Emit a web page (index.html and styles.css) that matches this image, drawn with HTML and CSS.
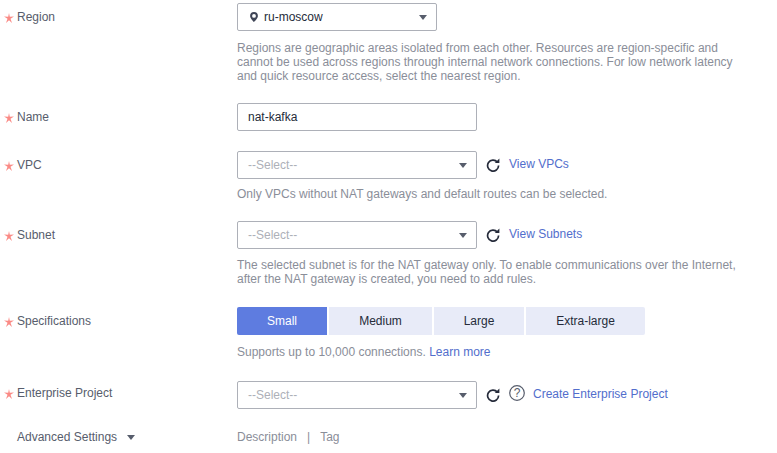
FILE: index.html
```html
<!DOCTYPE html>
<html lang="en">
<head>
<meta charset="utf-8">
<title>NAT Gateway</title>
<link rel="stylesheet" href="styles.css">
</head>
<body>
<svg class="defs" width="0" height="0" aria-hidden="true">
  <symbol id="refresh" viewBox="0 0 14 14">
    <path d="M11.3 4A5.5 5.5 0 1 0 12.6 7.6" fill="none" stroke="currentColor" stroke-width="1.7"/>
    <path d="M8.8 4.9H13.4V0.4z" fill="currentColor"/>
  </symbol>
</svg>
<form class="form">
  <div class="row row-region">
    <div class="label req">Region</div>
    <div class="body">
      <div class="select select-short">
        <svg class="pin" width="8" height="10" viewBox="0 0 8 10"><path fill-rule="evenodd" d="M4 0A3.9 3.9 0 0 0 .1 3.9C.1 6.3 4 10 4 10s3.9-3.7 3.9-6.1A3.9 3.9 0 0 0 4 0zm0 2a1.9 1.9 0 1 1 0 3.8A1.9 1.9 0 0 1 4 2z"/></svg>
        <span class="value">ru-moscow</span><i class="caret"></i>
      </div>
      <p class="hint hint-3">Regions are geographic areas isolated from each other. Resources are region-specific and<br>cannot be used across regions through internal network connections. For low network latency<br>and quick resource access, select the nearest region.</p>
    </div>
  </div>
  <div class="row row-name">
    <div class="label req">Name</div>
    <div class="body"><div class="input">nat-kafka</div></div>
  </div>
  <div class="row row-vpc">
    <div class="label req">VPC</div>
    <div class="body">
      <div class="line">
        <div class="select"><span class="placeholder">--Select--</span><i class="caret"></i></div>
        <svg class="refresh"><use href="#refresh"/></svg>
        <a class="link">View VPCs</a>
      </div>
      <p class="hint">Only VPCs without NAT gateways and default routes can be selected.</p>
    </div>
  </div>
  <div class="row row-subnet">
    <div class="label req">Subnet</div>
    <div class="body">
      <div class="line">
        <div class="select"><span class="placeholder">--Select--</span><i class="caret"></i></div>
        <svg class="refresh"><use href="#refresh"/></svg>
        <a class="link">View Subnets</a>
      </div>
      <p class="hint">The selected subnet is for the NAT gateway only. To enable communications over the Internet,<br>after the NAT gateway is created, you need to add rules.</p>
    </div>
  </div>
  <div class="row row-spec">
    <div class="label req">Specifications</div>
    <div class="body">
      <div class="tabs">
        <span class="tab tab-small on">Small</span>
        <span class="tab tab-medium">Medium</span>
        <span class="tab tab-large">Large</span>
        <span class="tab tab-xl">Extra-large</span>
      </div>
      <p class="hint hint-spec">Supports up to 10,000 connections. <a class="link">Learn more</a></p>
    </div>
  </div>
  <div class="row row-project">
    <div class="label req">Enterprise Project</div>
    <div class="body">
      <div class="line">
        <div class="select"><span class="placeholder">--Select--</span><i class="caret"></i></div>
        <svg class="refresh"><use href="#refresh"/></svg>
        <svg class="help" width="16" height="16" viewBox="0 0 16 16"><circle cx="8" cy="8" r="7.3" fill="none" stroke="currentColor" stroke-width="1.2"/><text x="8" y="12" text-anchor="middle" class="help-mark">?</text></svg>
        <a class="link link-project">Create Enterprise Project</a>
      </div>
    </div>
  </div>
  <div class="row row-adv">
    <div class="label">Advanced Settings<i class="caret caret-adv"></i></div>
    <div class="body adv"><span>Description</span><span class="sep">|</span><span>Tag</span></div>
  </div>
</form>
</body>
</html>
```
FILE: styles.css
```css
* { box-sizing: border-box; }
html, body { margin: 0; padding: 0; background: #fff; }
body {
  width: 777px;
  height: 453px;
  overflow: hidden;
  font: 12px/14px "Liberation Sans", Arial, sans-serif;
  color: #252b3a;
}
.defs { position: absolute; }
.form { padding-top: 3px; }
.row { display: flex; align-items: flex-start; }
.label {
  position: relative;
  width: 237px;
  flex: none;
  padding: 7px 0 0 17px;
  color: #575d6c;
}
.req::before {
  content: "";
  position: absolute;
  left: 4px;
  top: 10px;
  width: 10px;
  height: 10px;
  background: #fa8a85;
  clip-path: polygon(50% 0, 58% 38%, 100% 36%, 65% 58%, 80% 100%, 50% 72%, 20% 100%, 35% 58%, 0 36%, 42% 38%);
}
.body { flex: 1; min-width: 0; }
.line { display: flex; align-items: center; height: 28px; }
.select, .input {
  display: flex;
  align-items: center;
  width: 240px;
  height: 28px;
  border: 1px solid #adb0b8;
  border-radius: 2px;
  padding: 0 9px 0 10px;
  flex: none;
}
.select-short { width: 200px; }
.pin { fill: #3f4556; margin: -1px 6px 0 2px; flex: none; }
.value { flex: 1; color: #252b3a; }
.placeholder { flex: 1; color: #adb0b8; }
.caret {
  width: 0;
  height: 0;
  border-left: 4px solid transparent;
  border-right: 4px solid transparent;
  border-top: 5px solid #575d6c;
  flex: none;
}
.input { color: #252b3a; }
.refresh { width: 14px; height: 14px; margin-left: 9px; color: #252b3a; flex: none; }
.help { margin: -4px 0 0 9px; color: #575d6c; flex: none; }
.help-mark { font: 12px "Liberation Sans", Arial, sans-serif; fill: #575d6c; }
.link { color: #526ecc; }
.line .link { margin: -3px 0 0 9px; }
.line .link-project { margin-left: 8px; }
.hint { margin: 0; color: #8a8e99; }
.row-region { height: 100px; }
.hint-3 { margin-top: 10px; }
.row-name { height: 48px; }
.row-vpc { height: 70px; }
.row-vpc .hint { margin-top: 8px; }
.row-subnet { height: 86px; }
.row-subnet .hint { margin-top: 9px; }
.row-spec { height: 74px; }
.tabs { display: flex; gap: 2px; }
.tab {
  display: flex;
  align-items: center;
  justify-content: center;
  height: 28px;
  background: #e8ebf8;
  color: #252b3a;
}
.tab-small { width: 90px; border-radius: 2px 0 0 2px; }
.tab-medium { width: 103px; }
.tab-large { width: 90px; }
.tab-xl { width: 119px; border-radius: 0 2px 2px 0; }
.tab.on { background: #5e7ce0; color: #fff; }
.hint-spec { margin-top: 10px; }
.row-project { height: 49px; }
.row-project .label { padding-top: 5px; }
.row-project .req::before { top: 8px; }
.row-adv .label { padding-top: 0; }
.caret-adv { display: inline-block; margin-left: 10px; vertical-align: 1px; }
.adv { color: #8a8e99; }
.sep { margin: 0 10px; }
```
